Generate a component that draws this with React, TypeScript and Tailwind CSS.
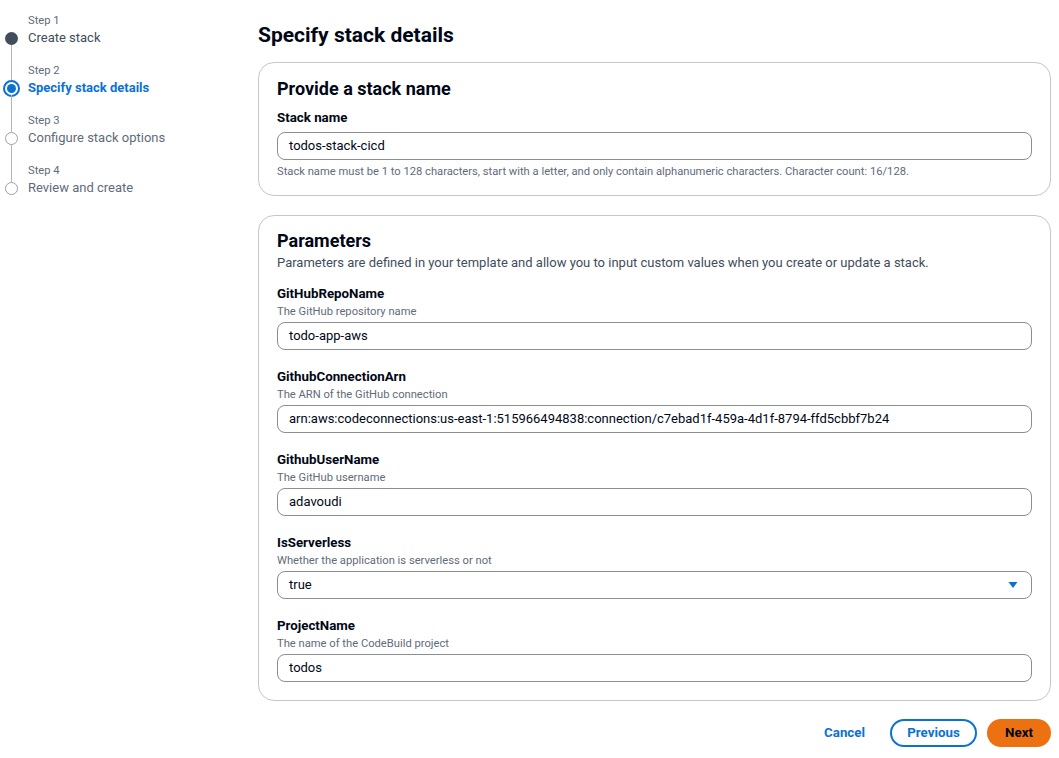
import React from "react";

const font = { fontFamily: 'Roboto, "Noto Sans", sans-serif' };

type StepState = "done" | "current" | "todo";

function StepCircle({ state }: { state: StepState }) {
  if (state === "done")
    return <div className="w-[13px] h-[13px] rounded-full bg-[#414d5c] shrink-0" />;
  if (state === "current")
    return (
      <div className="w-[17px] h-[17px] rounded-full border-[2px] border-[#0972d3] bg-white flex items-center justify-center shrink-0 -my-[2px]">
        <div className="w-[9px] h-[9px] rounded-full bg-[#0972d3]" />
      </div>
    );
  return <div className="w-[13px] h-[13px] rounded-full border-[1.5px] border-[#9ba1a9] bg-white shrink-0" />;
}

function Step({
  n,
  title,
  state,
  first,
  last,
}: {
  n: number;
  title: string;
  state: StepState;
  first?: boolean;
  last?: boolean;
}) {
  return (
    <div className="flex h-[50px]">
      <div className="w-[22px] flex flex-col items-center">
        <div className={`h-[19px] w-[1px] ${first ? "" : "bg-[#b4b4bb]"}`} />
        <StepCircle state={state} />
        <div className={`flex-1 w-[1px] ${last ? "" : "bg-[#b4b4bb]"}`} />
      </div>
      <div className="pl-[6px]">
        <div className="h-[15px] leading-[15px] text-[11.2px] text-[#5f6b7a]">Step {n}</div>
        <div
          className={`h-[20px] leading-[20px] text-[13px] ${
            state === "current" ? "text-[#0972d3] font-bold" : state === "done" ? "text-[#414d5c]" : "text-[#5f6b7a]"
          }`}
        >
          {title}
        </div>
      </div>
    </div>
  );
}

function Input({ value }: { value: string }) {
  return (
    <div className="h-[28px] border border-[#8c8c94] rounded-[8px] px-[11px] flex items-center text-[13px] text-[#000716]">
      {value}
    </div>
  );
}

function Field({ label, desc, value, select }: { label: string; desc: string; value: string; select?: boolean }) {
  return (
    <div className="flex flex-col">
      <div className="h-[20px] leading-[20px] text-[13.3px] font-bold text-[#000716]">{label}</div>
      <div className="h-[16px] leading-[16px] text-[11.2px] text-[#5f6b7a]">{desc}</div>
      <div className="mt-[2px]">
        {select ? (
          <div className="h-[28px] border border-[#8c8c94] rounded-[8px] pl-[11px] pr-[13px] flex items-center justify-between text-[13px] text-[#000716]">
            <span>{value}</span>
            <svg width="10" height="8" viewBox="0 0 10 8">
              <path d="M0.5 1 L9.5 1 L5 7 Z" fill="#0972d3" />
            </svg>
          </div>
        ) : (
          <Input value={value} />
        )}
      </div>
    </div>
  );
}

export default function App() {
  return (
    <div className="w-[1059px] h-[758px] bg-white flex overflow-hidden" style={font}>
      <nav className="w-[258px] shrink-0 pt-[13px] pl-[0px]">
        <Step n={1} title="Create stack" state="done" first />
        <Step n={2} title="Specify stack details" state="current" />
        <Step n={3} title="Configure stack options" state="todo" />
        <Step n={4} title="Review and create" state="todo" last />
      </nav>
      <main className="w-[793px] shrink-0 pt-[21px]">
        <h1 className="h-[28px] leading-[28px] text-[21px] font-bold text-[#000716]">Specify stack details</h1>
        <section className="mt-[13px] border border-[#c6c6cd] rounded-[16px] px-[18px] pt-[14px] pb-[15px]">
          <h2 className="h-[24px] leading-[24px] text-[18px] font-bold text-[#000716]">Provide a stack name</h2>
          <div className="mt-[7px] h-[20px] leading-[20px] text-[13.3px] font-bold text-[#000716]">Stack name</div>
          <div className="mt-[4px]">
            <Input value="todos-stack-cicd" />
          </div>
          <div className="mt-[4px] h-[16px] leading-[16px] text-[11.2px] text-[#5f6b7a]">
            Stack name must be 1 to 128 characters, start with a letter, and only contain alphanumeric characters. Character count: 16/128.
          </div>
        </section>
        <section className="mt-[19px] border border-[#c6c6cd] rounded-[16px] px-[18px] pt-[13px] pb-[18px]">
          <h2 className="h-[24px] leading-[24px] text-[18px] font-bold text-[#000716]">Parameters</h2>
          <div className="h-[20px] leading-[20px] text-[13px] text-[#414d5c]">
            Parameters are defined in your template and allow you to input custom values when you create or update a stack.
          </div>
          <div className="mt-[11px] flex flex-col gap-[17px]">
            <Field label="GitHubRepoName" desc="The GitHub repository name" value="todo-app-aws" />
            <Field
              label="GithubConnectionArn"
              desc="The ARN of the GitHub connection"
              value="arn:aws:codeconnections:us-east-1:515966494838:connection/c7ebad1f-459a-4d1f-8794-ffd5cbbf7b24"
            />
            <Field label="GithubUserName" desc="The GitHub username" value="adavoudi" />
            <Field label="IsServerless" desc="Whether the application is serverless or not" value="true" select />
            <Field label="ProjectName" desc="The name of the CodeBuild project" value="todos" />
          </div>
        </section>
        <div className="mt-[18px] flex justify-end items-center gap-[10px]">
          <button className="h-[28px] px-[15px] text-[13.3px] font-bold text-[#0972d3]">Cancel</button>
          <button className="h-[28px] w-[87px] rounded-full border-2 border-[#0972d3] text-[13.3px] font-bold text-[#0972d3]">
            Previous
          </button>
          <button className="h-[28px] w-[64px] rounded-full bg-[#ec7211] text-[13.3px] font-bold text-[#000716]">Next</button>
        </div>
      </main>
    </div>
  );
}
